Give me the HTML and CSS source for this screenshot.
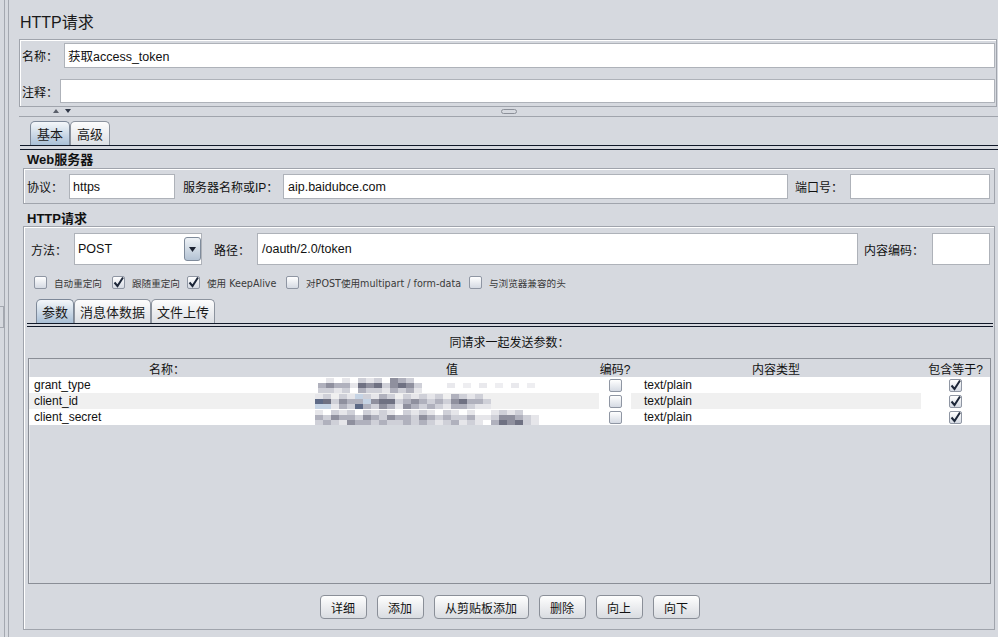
FILE: index.html
```html
<!DOCTYPE html>
<html lang="zh-CN">
<head>
<meta charset="utf-8">
<title>HTTP请求</title>
<link rel="stylesheet" href="styles.css">
</head>
<body>
<div class="app">
  <div class="gutter">
    <div class="nub-col"><div class="nub"></div></div>
    <div class="rail"></div>
  </div>
  <div class="main">
    <h1 class="title">HTTP请求</h1>
    <div class="name-panel">
      <div class="nrow r1"><label class="nlabel">名称：</label><div class="field">获取access_token</div></div>
      <div class="nrow r2"><label class="nlabel narrow">注释：</label><div class="field"></div></div>
    </div>
    <div class="splitter">
      <svg class="arrows" width="18" height="5" viewBox="0 0 18 5"><polygon points="0,4 6,4 3,0" fill="#5a5f6a"/><polygon points="12,0 18,0 15,4" fill="#2f3646"/></svg>
      <svg class="grip" width="16" height="5" viewBox="0 0 16 5"><rect x="0.5" y="0.5" width="15" height="4" rx="2" fill="none" stroke="#8c9099"/></svg>
      <span></span>
    </div>
    <div class="tabs">
      <div class="tab active">基本</div>
      <div class="tab">高级</div>
    </div>
    <div class="tab-rule"></div>
    <div class="content">
      <div class="sect web">Web服务器</div>
      <div class="box web-box">
        <span class="lbl w-proto">协议：</span>
        <div class="field w-https">https</div>
        <span class="lbl w-server">服务器名称或IP：</span>
        <div class="field grow">aip.baidubce.com</div>
        <span class="lbl w-port">端口号：</span>
        <div class="field w-portf"></div>
      </div>
      <div class="sect http">HTTP请求</div>
      <div class="box http-box">
        <div class="method-row">
          <span class="lbl w-method">方法：</span>
          <div class="combo"><span>POST</span><span class="combo-btn"><svg width="7" height="5" viewBox="0 0 7 5"><polygon points="0,0 7,0 3.5,5" fill="#1d2433"/></svg></span></div>
          <span class="lbl w-path">路径：</span>
          <div class="field grow">/oauth/2.0/token</div>
          <span class="lbl w-enc">内容编码：</span>
          <div class="field w-encf"></div>
        </div>
        <div class="opts">
          <div class="opt o1"><span class="cb"></span><span>自动重定向</span></div>
          <div class="opt o2"><span class="cb"><svg width="13" height="13" viewBox="0 0 13 13"><path d="M2.5 6.5 L5.5 10 L11 1.5" fill="none" stroke="#1c2638" stroke-width="2"/></svg></span><span>跟随重定向</span></div>
          <div class="opt o3"><span class="cb"><svg width="13" height="13" viewBox="0 0 13 13"><path d="M2.5 6.5 L5.5 10 L11 1.5" fill="none" stroke="#1c2638" stroke-width="2"/></svg></span><span>使用 KeepAlive</span></div>
          <div class="opt o4"><span class="cb"></span><span>对POST使用multipart / form-data</span></div>
          <div class="opt o5"><span class="cb"></span><span>与浏览器兼容的头</span></div>
        </div>
        <div class="tabs2">
          <div class="tab active">参数</div>
          <div class="tab">消息体数据</div>
          <div class="tab">文件上传</div>
        </div>
        <div class="tab-rule2"></div>
        <div class="caption">同请求一起发送参数：</div>
        <div class="table">
          <div class="thead">
            <div>名称：</div><div>值</div><div>编码?</div><div>内容类型</div><div>包含等于?</div>
          </div>
          <div class="trow">
            <div class="td name">grant_type</div>
            <div class="td val">
              <div class="mosaic m1">
                <i class="c0"></i><i class="c3"></i><i class="c2"></i>
                <i class="c1"></i><i class="c4"></i><i class="c2"></i>
                <i class="c0"></i><i class="c3"></i><i class="c1"></i>
                <i class="c1"></i><i class="c3"></i><i class="c2"></i>
                <i class="c0"></i><i class="c1"></i><i class="c0"></i>
                <i class="c2"></i><i class="c5"></i><i class="c3"></i>
                <i class="c1"></i><i class="c4"></i><i class="c2"></i>
                <i class="c2"></i><i class="c5"></i><i class="c2"></i>
                <i class="c0"></i><i class="c2"></i><i class="c1"></i>
                <i class="c4"></i><i class="c4"></i><i class="c3"></i>
                <i class="c3"></i><i class="c5"></i><i class="c2"></i>
                <i class="c2"></i><i class="c4"></i><i class="c3"></i>
                <i class="c0"></i><i class="c2"></i><i class="c1"></i>
              </div>
              <div class="faint"></div>
            </div>
            <div class="td chk"><span class="cb"></span></div>
            <div class="td type">text/plain</div>
            <div class="td chk"><span class="cb"><svg width="13" height="13" viewBox="0 0 13 13"><path d="M2.5 6.5 L5.5 10 L11 1.5" fill="none" stroke="#1c2638" stroke-width="2"/></svg></span></div>
          </div>
          <div class="trow alt">
            <div class="td name">client_id</div>
            <div class="td val">
              <div class="mosaic m2">
                <i class="c1"></i><i class="c7"></i><i class="c6"></i>
                <i class="c2"></i><i class="c5"></i><i class="c6"></i>
                <i class="c0"></i><i class="c2"></i><i class="c1"></i>
                <i class="c2"></i><i class="c4"></i><i class="c3"></i>
                <i class="c1"></i><i class="c3"></i><i class="c2"></i>
                <i class="c6"></i><i class="c3"></i><i class="c7"></i>
                <i class="c2"></i><i class="c6"></i><i class="c3"></i>
                <i class="c1"></i><i class="c4"></i><i class="c2"></i>
                <i class="c3"></i><i class="c5"></i><i class="c4"></i>
                <i class="c2"></i><i class="c5"></i><i class="c3"></i>
                <i class="c0"></i><i class="c2"></i><i class="c1"></i>
                <i class="c2"></i><i class="c3"></i><i class="c4"></i>
                <i class="c1"></i><i class="c4"></i><i class="c3"></i>
                <i class="c2"></i><i class="c3"></i><i class="c2"></i>
                <i class="c1"></i><i class="c2"></i><i class="c3"></i>
                <i class="c2"></i><i class="c3"></i><i class="c2"></i>
                <i class="c0"></i><i class="c2"></i><i class="c1"></i>
                <i class="c3"></i><i class="c4"></i><i class="c3"></i>
                <i class="c2"></i><i class="c5"></i><i class="c3"></i>
                <i class="c1"></i><i class="c3"></i><i class="c2"></i>
                <i class="c2"></i><i class="c3"></i><i class="c1"></i>
                <i class="c0"></i><i class="c2"></i><i class="c1"></i>
              </div>
            </div>
            <div class="td chk"><span class="cb"></span></div>
            <div class="td type">text/plain</div>
            <div class="td chk"><span class="cb"><svg width="13" height="13" viewBox="0 0 13 13"><path d="M2.5 6.5 L5.5 10 L11 1.5" fill="none" stroke="#1c2638" stroke-width="2"/></svg></span></div>
          </div>
          <div class="trow">
            <div class="td name">client_secret</div>
            <div class="td val">
              <div class="mosaic m2">
                <i class="c1"></i><i class="c3"></i><i class="c2"></i>
                <i class="c0"></i><i class="c2"></i><i class="c3"></i>
                <i class="c2"></i><i class="c4"></i><i class="c2"></i>
                <i class="c1"></i><i class="c3"></i><i class="c1"></i>
                <i class="c2"></i><i class="c3"></i><i class="c4"></i>
                <i class="c0"></i><i class="c2"></i><i class="c3"></i>
                <i class="c2"></i><i class="c4"></i><i class="c3"></i>
                <i class="c1"></i><i class="c3"></i><i class="c2"></i>
                <i class="c2"></i><i class="c2"></i><i class="c3"></i>
                <i class="c1"></i><i class="c4"></i><i class="c2"></i>
                <i class="c0"></i><i class="c3"></i><i class="c2"></i>
                <i class="c2"></i><i class="c3"></i><i class="c3"></i>
                <i class="c1"></i><i class="c2"></i><i class="c2"></i>
                <i class="c2"></i><i class="c4"></i><i class="c3"></i>
                <i class="c1"></i><i class="c3"></i><i class="c2"></i>
                <i class="c0"></i><i class="c2"></i><i class="c1"></i>
                <i class="c2"></i><i class="c3"></i><i class="c2"></i>
                <i class="c1"></i><i class="c2"></i><i class="c3"></i>
                <i class="c0"></i><i class="c2"></i><i class="c1"></i>
                <i class="c1"></i><i class="c3"></i><i class="c2"></i>
                <i class="c0"></i><i class="c1"></i><i class="c1"></i>
                <i class="c0"></i><i class="c1"></i><i class="c0"></i>
                <i class="c1"></i><i class="c2"></i><i class="c3"></i>
                <i class="c2"></i><i class="c4"></i><i class="c5"></i>
                <i class="c1"></i><i class="c4"></i><i class="c4"></i>
                <i class="c2"></i><i class="c3"></i><i class="c5"></i>
                <i class="c0"></i><i class="c2"></i><i class="c2"></i>
                <i class="c0"></i><i class="c1"></i><i class="c1"></i>
              </div>
            </div>
            <div class="td chk"><span class="cb"></span></div>
            <div class="td type">text/plain</div>
            <div class="td chk"><span class="cb"><svg width="13" height="13" viewBox="0 0 13 13"><path d="M2.5 6.5 L5.5 10 L11 1.5" fill="none" stroke="#1c2638" stroke-width="2"/></svg></span></div>
          </div>
        </div>
        <div class="btns">
          <button class="btn">详细</button>
          <button class="btn">添加</button>
          <button class="btn wide">从剪贴板添加</button>
          <button class="btn">删除</button>
          <button class="btn">向上</button>
          <button class="btn">向下</button>
        </div>
      </div>
    </div>
  </div>
</div>
</body>
</html>
```
FILE: styles.css
```css
* { box-sizing: border-box; }
html, body { margin: 0; padding: 0; }
body {
  width: 998px;
  height: 637px;
  overflow: hidden;
  background: #d6d9df;
  font-family: "Liberation Sans", "Noto Sans CJK SC", sans-serif;
  font-size: 12px;
  color: #111;
}
.app { display: flex; height: 637px; }

/* left gutter */
.gutter { width: 19px; flex: none; display: flex; }
.nub-col { width: 4px; }
.nub { margin-top: 306px; height: 22px; border: 1px solid #a4a8b0; border-left: none; }
.rail { width: 5px; height: 100%; border-left: 1px solid #a4a8b0; border-right: 1px solid #a4a8b0; }

.main { flex: 1; min-width: 0; display: flex; flex-direction: column; }

.title {
  margin: 0;
  height: 39px;
  padding: 13px 0 0 1px;
  font-size: 16px;
  line-height: 20px;
  font-weight: normal;
  color: #1a1a1a;
}

/* name / comment panel */
.name-panel {
  height: 68px;
  margin-right: 1px;
  border: 1px solid #a0a4ac;
  box-shadow: inset 1px 1px 0 #fff;
  padding: 3px 1px 3px 2px;
  display: flex;
  flex-direction: column;
  gap: 11px;
}
.nrow { display: flex; align-items: center; }
.nrow.r1 { height: 25px; }
.nrow.r2 { height: 24px; }
.nlabel { flex: none; width: 42px; }
.nlabel.narrow { width: 38px; }

.field {
  background: #fff;
  border: 1px solid #aeb2b9;
  padding-left: 3px;
  display: flex;
  align-items: center;
  font-size: 12.5px;
  color: #111;
  white-space: nowrap;
}
.nrow .field { flex: 1; height: 100%; }

/* splitter */
.splitter {
  height: 10px;
  border-bottom: 1px solid #a0a4ac;
  display: grid;
  grid-template-columns: 1fr auto 1fr;
  align-items: center;
}
.arrows { margin-left: 34px; display: block; }
.grip { display: block; }

/* tabs */
.tabs { height: 28px; display: flex; align-items: flex-end; padding-left: 11px; }
.tab {
  height: 24px;
  padding: 0 6px;
  border: 1px solid #8c939e;
  border-bottom: none;
  border-radius: 5px 5px 0 0;
  background: linear-gradient(#fdfdfd, #dcdfe4);
  display: flex;
  align-items: center;
  font-size: 13px;
  color: #1a1a1a;
  white-space: nowrap;
}
.tab.active { background: linear-gradient(#f4f7fa, #a9bfd6); border-color: #7d8898; }
.tab-rule {
  height: 5px;
  margin-left: 1px;
  border-top: 1px solid #101828;
  border-bottom: 1px solid #101828;
}

.content { padding: 0 3px 0 4px; }
.sect { font-weight: bold; font-size: 13px; padding-left: 4px; color: #111; }
.sect.web { height: 18px; padding-top: 2px; line-height: 16px; }
.sect.http { height: 22px; padding-top: 7px; line-height: 15px; }

.box { border: 1px solid #a0a4ac; box-shadow: inset 1px 1px 0 #fff; }

.lbl { flex: none; display: flex; align-items: center; white-space: nowrap; }

.web-box { height: 36px; padding: 5px 4px 0 3px; display: flex; }
.web-box > * { height: 25px; }
.w-proto { width: 42px; }
.w-https { width: 106px; }
.w-server { width: 100px; margin-left: 8px; }
.w-port { width: 55px; margin-left: 7px; }
.w-portf { width: 140px; }
.grow { flex: 1; padding-left: 4px; }

/* http box */
.http-box { height: 404px; padding: 6px 0 10px 0; }
.method-row { height: 32px; margin: 0 4px 0 7px; display: flex; }
.method-row > * { height: 32px; }
.w-method { width: 43px; }
.w-path { width: 43px; margin-left: 12px; }
.w-enc { width: 68px; margin-left: 6px; }
.w-encf { width: 58px; }
.combo {
  width: 128px;
  flex: none;
  display: flex;
  align-items: center;
  background: #fff;
  border: 1px solid #aeb2b9;
  padding-left: 3px;
  font-size: 12.5px;
}
.combo-btn {
  margin-left: auto;
  width: 17px;
  height: 24px;
  border: 1px solid #7f8b9b;
  border-radius: 3px;
  background: linear-gradient(#eef2f6, #b4c3d4);
  display: flex;
  align-items: center;
  justify-content: center;
}

.cb {
  width: 13px;
  height: 13px;
  flex: none;
  border: 1px solid #8f96a3;
  border-radius: 2px;
  background: linear-gradient(#ffffff, #d5dae3);
  display: inline-flex;
  align-items: center;
  justify-content: center;
  overflow: visible;
}
.cb svg { display: block; margin: -1px; }

.opts {
  height: 13px;
  margin: 11px 0 0 10px;
  display: flex;
  align-items: center;
  font-family: "DejaVu Sans", "Noto Sans CJK SC", sans-serif;
  font-size: 9.6px;
  color: #3a3a3a;
}
.opt { display: flex; align-items: center; gap: 7px; white-space: nowrap; }
.o1 { width: 78px; }
.o2 { width: 75px; }
.o3 { width: 99px; }
.o4 { width: 183px; }

.tabs2 { height: 24px; margin: 10px 0 0 12px; display: flex; align-items: flex-end; }
.tabs2 .tab { padding: 0 5px; }
.tab-rule2 {
  height: 4px;
  margin: 0 1px 0 3px;
  border-top: 1px solid #101828;
  border-bottom: 1px solid #101828;
}
.caption { height: 31px; padding-top: 8px; line-height: 16px; text-align: center; margin: 0 3px 0 4px; }

/* table */
.table {
  height: 226px;
  margin: 0 3px 0 4px;
  border: 1px solid #8a8e96;
  box-shadow: inset 1px 0 0 #e6e8ec;
}
.thead, .trow {
  display: grid;
  grid-template-columns: 276px 294px 32px 290px 1fr;
}
.thead { height: 18px; align-items: center; text-align: center; color: #111; }
.trow { height: 16px; background: #fff; }
.td { display: flex; align-items: center; white-space: nowrap; overflow: hidden; }
.trow.alt .td { background: #f0f0f0; }
.trow .td.chk { background: #fff; justify-content: center; }
.td.name { padding-left: 5px; }
.td.type { padding-left: 13px; }

.mosaic {
  display: grid;
  grid-auto-flow: column;
  grid-template-rows: repeat(3, 5px);
  grid-auto-columns: 8px;
}
.mosaic.m1 { margin-left: 13px; }
.mosaic.m2 { margin-left: 10px; }
.mosaic i { display: block; }
.c0 { background: transparent; }
.c1 { background: #e6e6ea; }
.c2 { background: #cfd0d8; }
.c3 { background: #b0b1bd; }
.c4 { background: #8f909e; }
.c5 { background: #6f7182; }
.c6 { background: #c5d3e4; }
.c7 { background: #5e6a86; }
.faint {
  margin-left: 25px;
  width: 96px;
  height: 5px;
  background: repeating-linear-gradient(90deg, #e9e9ed 0 8px, transparent 8px 16px, #eeeef1 16px 24px, transparent 24px 32px);
}

/* buttons */
.btns { height: 24px; margin: 11px 3px 0 4px; display: flex; justify-content: center; gap: 10px; }
.btn {
  width: 47px;
  height: 24px;
  padding: 0;
  border: 1px solid #8a8f98;
  border-radius: 4px;
  background: linear-gradient(#fefefe, #d9dce1);
  font-family: "Liberation Sans", "Noto Sans CJK SC", sans-serif;
  font-size: 12px;
  color: #111;
}
.btn.wide { width: 95px; }
```
